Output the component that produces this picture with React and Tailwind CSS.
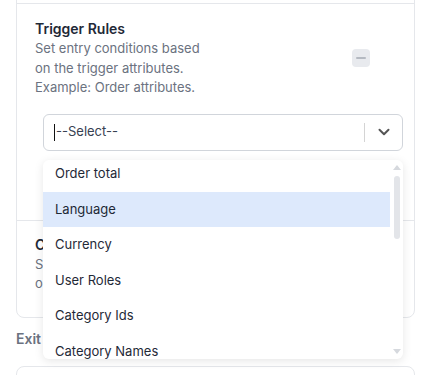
import React from 'react';

const options = ['Order total', 'Language', 'Currency', 'User Roles', 'Category Ids', 'Category Names'];

const App = () => {
  return (
    <div className="w-[432px] h-[375px] overflow-hidden bg-white" style={{ fontFamily: 'Inter, "Noto Sans", sans-serif' }}>
      <div className="pl-[16px] pr-[17px]">
        {/* Rules card, its top is above the view */}
        <div className="-mt-[10px] border border-[#e5e7eb] rounded-b-lg">
          <div className="h-[13px] border-b border-[#e5e7eb]" />

          {/* Trigger rules */}
          <div className="border-b border-[#e5e7eb] pt-[15px] pb-[69px]">
            <div className="flex items-center justify-between pl-[18px] pr-[44px]">
              <div>
                <h3 className="text-[14px] leading-5 font-semibold text-[#1f2937]">Trigger Rules</h3>
                <p className="text-[13px] leading-[19.5px] text-[#6b7280] w-[175px]">
                  Set entry conditions based on the trigger attributes. Example: Order attributes.
                </p>
              </div>
              <div className="w-[18px] h-[18px] rounded bg-[#e8eaee] flex items-center justify-center">
                <div className="w-[10px] h-[2px] rounded bg-[#b4b9c1]" />
              </div>
            </div>

            <div className="relative mt-[16px] ml-[26px] mr-[11px]">
              <div className="h-[37px] border border-[#d1d5db] rounded-md flex items-center">
                <div className="flex-1 flex items-center pl-[10px] text-[13px] text-[#374151]">
                  <span className="w-px h-[17px] bg-[#111] mr-px" />
                  --Select--
                </div>
                <div className="w-px h-[19px] bg-[#d4d4d4]" />
                <div className="w-[37px] flex items-center justify-center text-[#555]">
                  <svg width="12" height="8" viewBox="0 0 12 8" fill="none">
                    <path d="M1.5 1.8 6 6.2 10.5 1.8" stroke="currentColor" strokeWidth="2" strokeLinecap="round" strokeLinejoin="round" />
                  </svg>
                </div>
              </div>

              {/* Dropdown menu */}
              <div className="absolute left-0 right-0 top-[46px] h-[199px] bg-white rounded-md shadow-[0_2px_10px_rgba(0,0,0,0.1)] overflow-hidden flex z-10">
                <div className="flex-1 overflow-hidden">
                  <div className="-mt-[3.5px]">
                    {options.map((o, i) => (
                      <div
                        key={o}
                        className={`h-[35.5px] flex items-center pl-3 text-[13px] text-[#1f2937] ${i === 1 ? 'bg-[#dde9fc]' : ''}`}
                      >
                        {o}
                      </div>
                    ))}
                  </div>
                </div>
                <div className="w-[13px] flex flex-col items-center pt-[4px] pb-[4px]">
                  <svg width="8" height="5" viewBox="0 0 8 5" className="mt-px">
                    <path d="M0 5 4 0 8 5Z" fill="#d6d9de" />
                  </svg>
                  <div className="mt-[6px] w-[6px] h-[63px] rounded-full bg-[#e3e5e9]" />
                  <div className="flex-1" />
                  <svg width="8" height="5" viewBox="0 0 8 5" className="mb-[1px]">
                    <path d="M0 0 4 5 8 0Z" fill="#d6d9de" />
                  </svg>
                </div>
              </div>
            </div>
          </div>

          {/* Conditions */}
          <div className="pt-[14px] pb-[23px] pl-[18px] pr-[44px]">
            <h3 className="text-[14px] leading-5 font-semibold text-[#1f2937]">Conditions</h3>
            <p className="text-[13px] leading-[19.5px] text-[#6b7280] w-[175px]">
              Set conditions based on the order attributes.
            </p>
          </div>
        </div>

        <h3 className="mt-[11px] text-[14px] leading-5 font-semibold text-[#6b7280]">Exit</h3>
        <div className="mt-[17px] h-[60px] border border-[#e5e7eb] rounded-lg" />
      </div>
    </div>
  );
};

export default App;
